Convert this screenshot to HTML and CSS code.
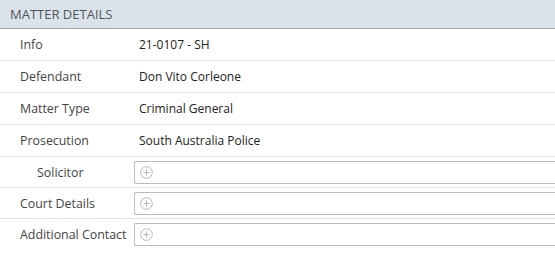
FILE: index.html
```html
<!DOCTYPE html>
<html lang="en">

<head>
    <meta charset="UTF-8">
    <meta name="viewport" content="width=device-width, initial-scale=1.0">
    <title>Matter Details</title>
    <link rel="stylesheet" href="styles.css">
</head>

<body>
    <section class="panel">
        <header class="panel-header">MATTER DETAILS</header>
        <div class="row">
            <div class="label">Info</div>
            <div class="value">21-0107 - SH</div>
        </div>
        <div class="row">
            <div class="label">Defendant</div>
            <div class="value">Don Vito Corleone</div>
        </div>
        <div class="row">
            <div class="label">Matter Type</div>
            <div class="value">Criminal General</div>
        </div>
        <div class="row">
            <div class="label">Prosecution</div>
            <div class="value">South Australia Police</div>
        </div>
        <div class="row input-row">
            <div class="label indent">Solicitor</div>
            <div class="picker">
                <svg class="add-icon" width="13" height="13" viewBox="0 0 13 13">
                    <circle cx="6.5" cy="6.5" r="5.8" fill="none" stroke="#b5b5b5" stroke-width="1"/>
                    <path d="M6.5 3.5v6M3.5 6.5h6" stroke="#b5b5b5" stroke-width="1"/>
                </svg>
            </div>
        </div>
        <div class="row input-row">
            <div class="label">Court Details</div>
            <div class="picker">
                <svg class="add-icon" width="13" height="13" viewBox="0 0 13 13">
                    <circle cx="6.5" cy="6.5" r="5.8" fill="none" stroke="#b5b5b5" stroke-width="1"/>
                    <path d="M6.5 3.5v6M3.5 6.5h6" stroke="#b5b5b5" stroke-width="1"/>
                </svg>
            </div>
        </div>
        <div class="row input-row last">
            <div class="label">Additional Contact</div>
            <div class="picker">
                <svg class="add-icon" width="13" height="13" viewBox="0 0 13 13">
                    <circle cx="6.5" cy="6.5" r="5.8" fill="none" stroke="#b5b5b5" stroke-width="1"/>
                    <path d="M6.5 3.5v6M3.5 6.5h6" stroke="#b5b5b5" stroke-width="1"/>
                </svg>
            </div>
        </div>
    </section>
</body>

</html>
```

FILE: styles.css
```css
body {
    font-family: "Open Sans", "Noto Sans", sans-serif;
    font-size: 12px;
    margin: 0;
    padding: 0;
    background-color: #fff;
    color: #333;
}

.panel-header {
    height: 29px;
    box-sizing: border-box;
    padding-left: 10px;
    display: flex;
    align-items: center;
    background-color: #dae3ec;
    border-bottom: 1px solid #a8a8a8;
    color: #555;
    font-size: 13px;
}

.row {
    display: flex;
    align-items: center;
    height: 32px;
    box-sizing: border-box;
    border-bottom: 1px solid #e3e3e3;
}

.input-row {
    height: 31px;
}

.row.last {
    border-bottom: none;
}

.label {
    width: 114px;
    padding-left: 20px;
    flex-shrink: 0;
    color: #444;
    font-size: 12.4px;
}

.label.indent {
    padding-left: 37px;
    width: 97px;
}

.value {
    padding-left: 5px;
    color: #222;
}

.picker {
    flex: 1;
    height: 23px;
    box-sizing: border-box;
    border: 1px solid #bcbcbc;
    border-right: none;
    border-radius: 2px 0 0 2px;
    display: flex;
    align-items: center;
    padding-left: 5px;
}
```
